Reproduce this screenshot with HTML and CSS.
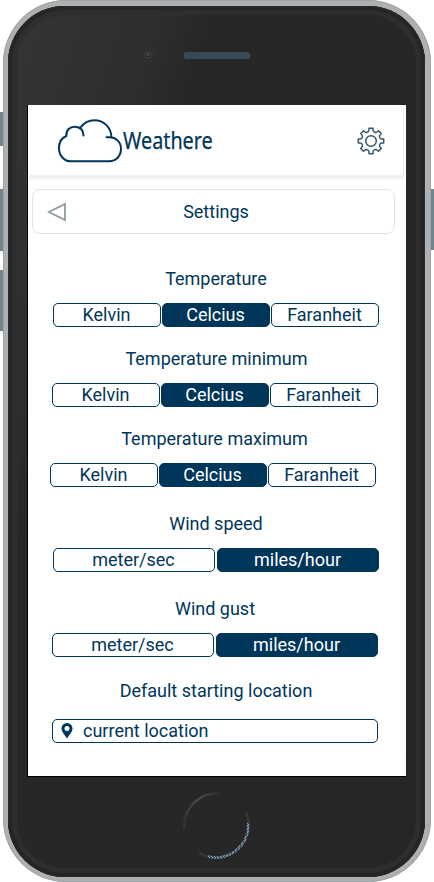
FILE: index.html
```html
<!DOCTYPE html>
<html lang="en">
<head>
<meta charset="utf-8">
<title>Weathere</title>
<link rel="stylesheet" href="styles.css">
</head>
<body>
<div class="phone">
  <i class="key mute"></i><i class="key vol-up"></i><i class="key vol-down"></i><i class="key power"></i>
  <div class="body">
    <div class="top">
      <svg width="120" height="20" viewBox="0 0 120 20">
        <defs><pattern id="mesh" width="4" height="4" patternUnits="userSpaceOnUse"><rect width="4" height="4" fill="#3b4248"/><path d="M0 1h1M2 1h1M1 3h1M3 3h1" stroke="#34617f"/></pattern></defs>
        <circle cx="10" cy="10" r="7" fill="none" stroke="#333"/>
        <circle cx="10.300" cy="10" r="3" fill="#242729" stroke="#46494b"/>
        <circle cx="10.300" cy="9.500" r="1" fill="#597689"/>
        <rect x="45.500" y="7" width="67" height="7" rx="3.500" fill="url(#mesh)"/>
      </svg>
    </div>
    <main class="screen">
      <header class="header">
        <svg class="cloud" width="66" height="46" viewBox="0 0 66 46" fill="none" stroke="#00365a" stroke-width="2" stroke-linecap="round">
          <path d="M9.300 18C4.500 20 2 25 2 30C2 37.500 7 43.300 14 43.300H52C59 43.300 64 38 64 31C64 24 59 19 52 19.200H49.500M9.300 18C9 12 13 8.500 18 8.700C23.500 9 26.500 12.500 26.500 17.500M23 10C27 4.500 32 2.200 37.500 2.200C46.500 2.200 54 9 54.500 19.200"/>
        </svg>
        <span class="brand">Weathere</span>
        <svg class="gear" width="28" height="28" viewBox="0 0 28 28" fill="none" stroke="#35566f" stroke-width="1.500" stroke-linejoin="round">
          <circle cx="14" cy="14" r="5.300"/>
          <path d="M12 1.300H16V3Q16 4.700 17.600 5.300Q19.200 6 20.300 4.800L21.500 3.700L24.300 6.500L23.200 7.700Q22 8.800 22.700 10.400Q23.300 12 25 12H26.700V16H25Q23.300 16 22.700 17.600Q22 19.200 23.200 20.300L24.300 21.500L21.500 24.300L20.300 23.200Q19.200 22 17.600 22.700Q16 23.300 16 25V26.700H12V25Q12 23.300 10.400 22.700Q8.800 22 7.700 23.200L6.500 24.300L3.700 21.500L4.800 20.300Q6 19.200 5.300 17.600Q4.700 16 3 16H1.300V12H3Q4.700 12 5.300 10.400Q6 8.800 4.800 7.700L3.700 6.500L6.500 3.700L7.700 4.800Q8.800 6 10.400 5.300Q12 4.700 12 3Z"/>
        </svg>
      </header>
      <nav class="titlebar">
        <svg class="back" width="20" height="20" viewBox="0 0 20 20" fill="none" stroke="#8c9aa3" stroke-width="1.800"><path d="M18 2v16L1.800 10z"/></svg>
        <h1>Settings</h1>
      </nav>
      <section class="group">
        <h2>Temperature</h2>
        <div class="seg"><button>Kelvin</button><button class="on">Celcius</button><button>Faranheit</button></div>
      </section>
      <section class="group min">
        <h2>Temperature minimum</h2>
        <div class="seg"><button>Kelvin</button><button class="on">Celcius</button><button>Faranheit</button></div>
      </section>
      <section class="group max">
        <h2>Temperature maximum</h2>
        <div class="seg"><button>Kelvin</button><button class="on">Celcius</button><button>Faranheit</button></div>
      </section>
      <section class="group speed">
        <h2>Wind speed</h2>
        <div class="seg two"><button>meter/sec</button><button class="on">miles/hour</button></div>
      </section>
      <section class="group gust">
        <h2>Wind gust</h2>
        <div class="seg two"><button>meter/sec</button><button class="on">miles/hour</button></div>
      </section>
      <section class="group place">
        <h2>Default starting location</h2>
        <div class="location">
          <svg width="12" height="16" viewBox="0 0 12 16"><path fill="#00365a" fill-rule="evenodd" d="M6 0a5.500 5.500 0 0 0-5.500 5.500C.5 9 4 12 6 15.500C8 12 11.500 9 11.500 5.500A5.500 5.500 0 0 0 6 0zM6 3a2.500 2.500 0 1 1 0 5a2.500 2.500 0 1 1 0-5z"/></svg>
          <span>current location</span>
        </div>
      </section>
    </main>
    <div class="bottom">
      <svg width="70" height="70" viewBox="0 0 70 70" fill="none" stroke-width="2.500">
        <defs>
          <pattern id="glint" width="3" height="3" patternUnits="userSpaceOnUse"><rect width="3" height="3" fill="#35536a"/><path d="M0 .5h1M2 2.500h1" stroke="#8fa0ad"/></pattern>
          <linearGradient id="hi"><stop stop-color="#343434"/><stop offset=".35" stop-color="#484848"/><stop offset="1" stop-color="#2b2b2b"/></linearGradient>
        </defs>
        <path stroke="url(#hi)" d="M2.500 38A32 32 0 0 1 40 3.200"/>
        <path stroke="#35383a" d="M17 61.500A32 32 0 0 0 63.500 21"/>
        <path stroke="url(#glint)" d="M26 65.400A32 32 0 0 0 66 32"/>
      </svg>
    </div>
  </div>
</div>
</body>
</html>
```
FILE: styles.css
```css
* { box-sizing: border-box; }
body {
  margin: 0;
  height: 882px;
  overflow: hidden;
  background: #fff;
  color: #00365a;
  font-family: Roboto, "Liberation Sans", sans-serif;
}
.phone {
  position: relative;
  width: 428px;
  height: 882px;
  margin-left: 3px;
  padding: 6px 5px 5px;
  border-radius: 63px;
  background: #b0b0b0;
  box-shadow: inset 0 0 0 1px #9da4a8;
}
.body {
  width: 417px;
  height: 871px;
  padding: 0 19px 0 20px;
  border-radius: 57px;
  background: linear-gradient(110deg, #353535 0, #2d2d2d 22%, #272727 28%, #262626 100%);
  box-shadow: inset 0 0 0 1px #222d35, inset 0 0 0 4px #252525, inset 0 0 0 9px #2e2e2e;
}
.top { height: 99px; padding: 39px 0 0 110px; }
.top svg, .bottom svg { display: block; }
.key { position: absolute; width: 3px; background: #718490; }
.mute { left: -3px; top: 112px; height: 34px; }
.vol-up { left: -3px; top: 189px; height: 62px; }
.vol-down { left: -3px; top: 270px; height: 61px; }
.power { right: -3px; top: 189px; height: 61px; }
.screen {
  width: 378px;
  height: 672px;
  background: #fff;
  border-bottom: 1px solid #000;
  box-shadow: -1px 0 #000;
}
.header {
  display: flex;
  width: 376px;
  height: 70px;
  padding-left: 29px;
  border-right: 1px solid #f0f0f0;
  clip-path: inset(0 0 -8px 0);
  box-shadow: 0 4px 2px #f0f0f0;
}
.cloud { margin-top: 13px; flex: none; }
.brand {
  width: 90px;
  margin-top: 19px;
  font: 400 23px/32px "Noto Sans", "Open Sans", sans-serif;
  -webkit-text-stroke: .25px #00365a;
  transform: scaleX(.86);
  transform-origin: left;
}
.gear { margin: 22px 18.5px 0 auto; }
.titlebar {
  display: flex;
  align-items: center;
  width: 363px;
  height: 45px;
  margin: 14px 0 0 4px;
  padding-left: 14px;
  border: 1px solid #dfe2e4;
  border-radius: 8px;
}
h1, h2 { margin: 0; font-size: 18px; line-height: 24px; font-weight: 400; text-align: center; }
h1 { flex: 1; padding-right: 29px; }
.group { width: 326px; margin: 33px 0 0 25px; }
.group h2 { margin-bottom: 12px; }
.min { margin: 20px 0 0 24px; }
.max { margin: 20px 0 0 22px; }
.min h2, .max h2 { padding-left: 3px; }
.speed { margin-top: 25px; }
.gust { margin: 25px 0 0 24px; }
.place { margin: 22px 0 0 24px; }
.place h2 { margin-bottom: 16px; padding-left: 2px; }
.seg { display: grid; grid-template-columns: repeat(3, 1fr); gap: 1px; }
.two { grid-template-columns: 1fr 1fr; gap: 2px; }
button {
  height: 24px;
  padding: 0 1px 0 0;
  border: 1px solid #00365a;
  border-radius: 5px;
  background: #fff;
  color: #00365a;
  font: 400 18px/22px Roboto, sans-serif;
}
.on { background: #00365a; color: #fff; }
.location {
  display: flex;
  align-items: center;
  gap: 10px;
  height: 24px;
  padding-left: 8px;
  border: 1px solid #00365a;
  border-radius: 5px;
  font-size: 18px;
  line-height: 22px;
}
.bottom { padding: 14px 0 0 154px; }
```
